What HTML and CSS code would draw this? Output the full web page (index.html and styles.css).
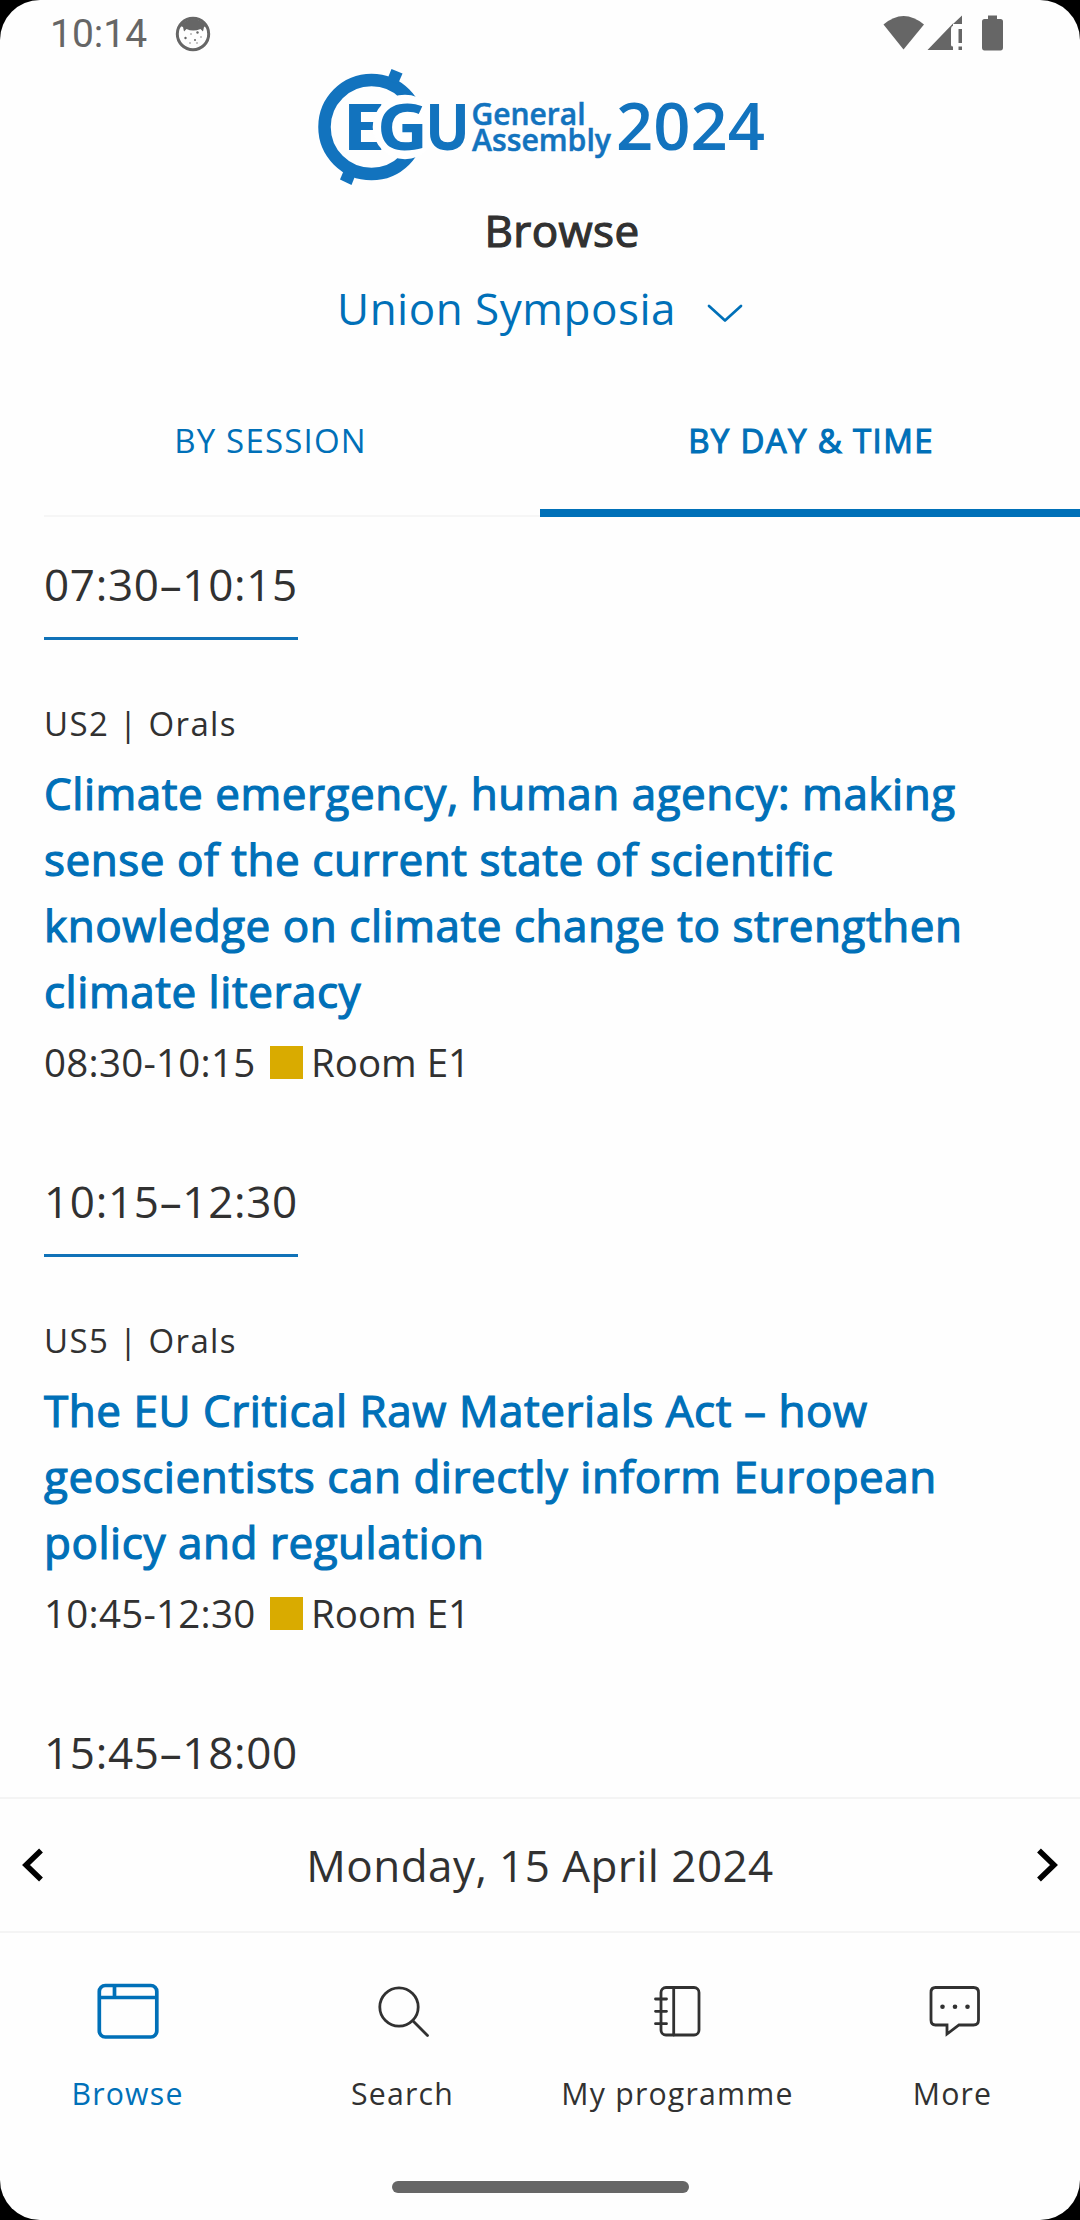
FILE: index.html
```html
<!DOCTYPE html>
<html lang="en">
<head>
    <meta charset="UTF-8">
    <meta name="viewport" content="width=device-width, initial-scale=1.0">
    <title>EGU General Assembly 2024 - Browse</title>
    <link rel="stylesheet" href="styles.css">
</head>
<body>
    <div class="phone">
        <!-- Status bar -->
        <div class="status-bar">
            <span class="clock">10:14</span>
            <svg class="status-app" width="36" height="36" viewBox="0 0 36 36">
                <circle cx="18" cy="18" r="15.700" fill="none" stroke="#666" stroke-width="3"/>
                <path d="M5 10 Q11 3 18 3 Q25 3 31 10 L29 11 L28 15.500 L25.500 13 Q18 16 11.500 13 L9 15.500 L8 11 Z" fill="#666"/>
                <g fill="#666">
                    <circle cx="10.500" cy="22" r="1.200"/>
                    <circle cx="22.500" cy="16.500" r="1.200"/>
                    <circle cx="20" cy="24" r="1"/>
                    <circle cx="16" cy="18" r=".7"/>
                    <circle cx="26" cy="21" r=".7"/>
                    <circle cx="15" cy="27" r=".7"/>
                    <circle cx="22" cy="27" r=".7"/>
                </g>
            </svg>
            <svg class="status-icons" width="124" height="40" viewBox="0 0 124 40" fill="#666">
                <path d="M3.500 10.500 Q23.500 -6.500 44 10.500 L23.500 35.500 Z"/>
                <path d="M47.500 36 L73 9.500 V12 Q71 12 71 16 V31 Q71 32.500 73 32.500 V36 Z M73 10 L82 1.500 V10 Z"/>
                <path d="M78.500 15 H82 V29 H78.500 Z M78.500 32.500 H82 V36 H78.500 Z"/>
                <path d="M108 1.500 H117 V5 H120.500 Q123 5 123 7.500 V33.500 Q123 36.500 120.500 36.500 H104.500 Q102 36.500 102 33.500 V7.500 Q102 5 104.500 5 H108 Z"/>
            </svg>
        </div>

        <header>
            <svg class="logo" width="480" height="150" viewBox="0 0 480 150" fill="#1273be">
                <circle cx="71.500" cy="77" r="47" fill="none" stroke="#1273be" stroke-width="12.500"/>
                <polygon points="91.500,19 102.500,23.500 98,34 87,30"/>
                <polygon points="40,129.500 51.500,135 55.500,125 44,120"/>
                <text class="logo-egu" x="42" y="100" textLength="44" lengthAdjust="spacingAndGlyphs">E</text>
                <circle cx="105" cy="77" r="32.300" fill="#fff"/>
                <text class="logo-egu" x="77" y="100" textLength="51" lengthAdjust="spacingAndGlyphs">G</text>
                <text class="logo-egu" x="125" y="100" textLength="45" lengthAdjust="spacingAndGlyphs">U</text>
                <text class="logo-name" x="171.500" y="74.500" textLength="114" lengthAdjust="spacingAndGlyphs">General</text>
                <text class="logo-name" x="172" y="101" textLength="139" lengthAdjust="spacingAndGlyphs">Assembly</text>
                <text class="logo-year" x="316" y="100" textLength="149" lengthAdjust="spacingAndGlyphs">2024</text>
            </svg>
            <h1>Browse</h1>
            <div class="group-select">
                <span>Union Symposia</span>
                <svg width="36" height="20" viewBox="0 0 36 20" fill="none" stroke="#0070b8" stroke-width="2.700" stroke-linecap="round" stroke-linejoin="round">
                    <path d="M2 2 L18 16.500 L34 2"/>
                </svg>
            </div>
        </header>

        <nav class="tabs">
            <a class="tab">BY SESSION</a>
            <a class="tab active">BY DAY &amp; TIME</a>
        </nav>

        <!-- Sessions of the day -->
        <main class="sessions">
            <section class="slot">
                <h2>07:30–10:15</h2>
                <p class="code">US2 | Orals</p>
                <h3>Climate emergency, human agency: making<br>sense of the current state of scientific<br>knowledge on climate change to strengthen<br>climate literacy</h3>
                <p class="room"><span class="time">08:30-10:15</span><i class="room-color"></i><span>Room E1</span></p>
            </section>
            <section class="slot">
                <h2>10:15–12:30</h2>
                <p class="code">US5 | Orals</p>
                <h3>The EU Critical Raw Materials Act – how<br>geoscientists can directly inform European<br>policy and regulation</h3>
                <p class="room"><span class="time">10:45-12:30</span><i class="room-color"></i><span>Room E1</span></p>
            </section>
            <section class="slot">
                <h2>15:45–18:00</h2>
            </section>
        </main>

        <div class="day-picker">
            <svg width="22" height="34" viewBox="0 0 22 34" fill="none" stroke="#000" stroke-width="5.500">
                <path d="M19 2.500 L4 17 L19 31.500"/>
            </svg>
            <span>Monday, 15 April 2024</span>
            <svg width="22" height="34" viewBox="0 0 22 34" fill="none" stroke="#000" stroke-width="5.500">
                <path d="M3 2.500 L18 17 L3 31.500"/>
            </svg>
        </div>

        <nav class="bottom-nav">
            <a class="nav-item active">
                <svg width="66" height="66" viewBox="0 0 66 66" fill="none" stroke="currentColor" stroke-width="3.700">
                    <rect x="4.300" y="7.500" width="57.500" height="51.500" rx="6"/>
                    <path d="M4.300 19.500 H61.800 M19.500 7.500 V19.500"/>
                </svg>
                <span>Browse</span>
            </a>
            <a class="nav-item">
                <svg width="66" height="66" viewBox="0 0 66 66" fill="none" stroke="currentColor" stroke-width="2.800" stroke-linecap="round">
                    <circle cx="29" cy="29" r="19.200"/>
                    <path d="M42.800 42.800 L57.500 57.500"/>
                </svg>
                <span>Search</span>
            </a>
            <a class="nav-item">
                <svg width="66" height="66" viewBox="0 0 66 66" fill="none" stroke="currentColor" stroke-width="2.800" stroke-linecap="round">
                    <rect x="16" y="9.500" width="38" height="47.500" rx="5"/>
                    <path d="M28.700 9.500 V57 M10.500 21 H21.500 M10.500 33.300 H21.500 M10.500 45.700 H21.500"/>
                </svg>
                <span>My programme</span>
            </a>
            <a class="nav-item">
                <svg width="66" height="66" viewBox="0 0 66 66" fill="none" stroke="currentColor" stroke-width="2.800">
                    <path d="M15.500 9.500 H53.500 Q58.500 9.500 58.500 14.500 V42 Q58.500 47 53.500 47 H39 L27 56 V47 H15.500 Q11 47 11 42 V14.500 Q11 9.500 15.500 9.500 Z"/>
                    <g fill="currentColor" stroke="none">
                        <circle cx="22.500" cy="28.700" r="2.300"/>
                        <circle cx="35" cy="28.700" r="2.300"/>
                        <circle cx="47.500" cy="28.700" r="2.300"/>
                    </g>
                </svg>
                <span>More</span>
            </a>
        </nav>
        <div class="home-bar"></div>
    </div>
</body>
</html>
```
FILE: styles.css
```css
/* General Reset */
* {
    margin: 0;
    padding: 0;
    box-sizing: border-box;
}

body {
    font-family: 'Open Sans', sans-serif;
    font-size: 44px;
    line-height: 66px;
    background-color: #000;
    color: #313131;
}

svg {
    display: block;
    flex: none;
}

.phone {
    display: flex;
    flex-direction: column;
    width: 1080px;
    height: 2220px;
    background: #fefefe;
    border-radius: 40px;
    overflow: hidden;
}

/* Status bar */
.status-bar {
    display: flex;
    align-items: center;
    height: 50px;
    padding: 17px 76px 0 50px;
    font-family: Roboto, sans-serif;
    font-size: 39px;
    line-height: 33px;
    color: #666;
}

.clock {
    width: 125px;
    padding-top: 2px;
}

.status-icons {
    margin-left: auto;
    margin-top: 1px;
}

/* Header */
header {
    display: flex;
    flex-direction: column;
    align-items: center;
    height: 341px;
}

.logo-egu {
    font-size: 65px;
    font-weight: 700;
}

.logo-name {
    font-size: 30px;
    font-weight: 600;
    stroke: #1273be;
    stroke-width: 0.500px;
}

.logo-year {
    font-size: 65px;
    font-weight: 600;
}

header h1 {
    margin: -3px 0 0 44px;
    font-size: 44px;
    font-weight: 400;
    letter-spacing: 0.400px;
    -webkit-text-stroke: 1.200px;
}

.group-select {
    display: flex;
    align-items: center;
    gap: 31px;
    margin-top: 12px;
    color: #0070b8;
    letter-spacing: 0.500px;
}

.group-select svg {
    margin-top: 12px;
}

/* Tabs */
.tabs {
    display: flex;
    height: 126px;
    font-size: 33px;
    color: #0070b8;
}

.tab {
    flex: 1;
    padding-top: 17px;
    text-align: center;
    letter-spacing: 1.200px;
}

.tab:first-child {
    flex: none;
    width: 496px;
    margin-left: 44px;
    padding-right: 43px;
    border-bottom: 2px solid #f6f6f6;
}

.tab.active {
    border-bottom: 8px solid #0070b8;
    padding-left: 2px;
    letter-spacing: 1.350px;
    -webkit-text-stroke: 1.100px;
}

/* Sessions */
.sessions {
    height: 1280px;
    padding: 34px 44px 0;
    overflow: hidden;
}

.slot {
    display: flex;
    flex-direction: column;
    align-items: flex-start;
    margin-bottom: 77px;
}

.slot h2 {
    padding-bottom: 20px;
    border-bottom: 3px solid #1072b8;
    margin-bottom: 59px;
    font-size: 44px;
    font-weight: 400;
    letter-spacing: 0.690px;
}

.slot .code {
    font-size: 33px;
    line-height: 50px;
    letter-spacing: 1.370px;
}

.slot h3 {
    margin-top: 11px;
    font-size: 44px;
    font-weight: 400;
    color: #0070b8;
    white-space: nowrap;
    letter-spacing: 0.540px;
    font-feature-settings: 'liga' 1;
    -webkit-text-stroke: 1.200px;
}

.slot .room {
    display: flex;
    align-items: center;
    margin-top: 9px;
    font-size: 38.500px;
    line-height: 58px;
}

.slot .time {
    width: 226px;
    letter-spacing: 0.250px;
}

.room-color {
    width: 33px;
    height: 33px;
    margin-right: 8px;
    background: #d9ab00;
}

/* Day picker */
.day-picker {
    display: flex;
    align-items: center;
    justify-content: space-between;
    height: 136px;
    padding: 0 22px;
    border-top: 2px solid #f4f4f4;
    border-bottom: 2px solid #f4f4f4;
    letter-spacing: 0.450px;
}

/* Bottom navigation */
.bottom-nav {
    display: flex;
    flex: none;
    width: 1100px;
    height: 248px;
    margin-left: -10px;
    padding-top: 45px;
}

.nav-item {
    display: flex;
    flex-direction: column;
    align-items: center;
    width: 275px;
    font-size: 30.250px;
    line-height: 42px;
    letter-spacing: 1.200px;
}

.nav-item.active {
    color: #0070b8;
}

.nav-item span {
    margin-top: 29px;
}

.home-bar {
    flex: none;
    width: 297px;
    height: 12px;
    margin: 0 auto;
    border-radius: 6px;
    background: #666;
}
```
